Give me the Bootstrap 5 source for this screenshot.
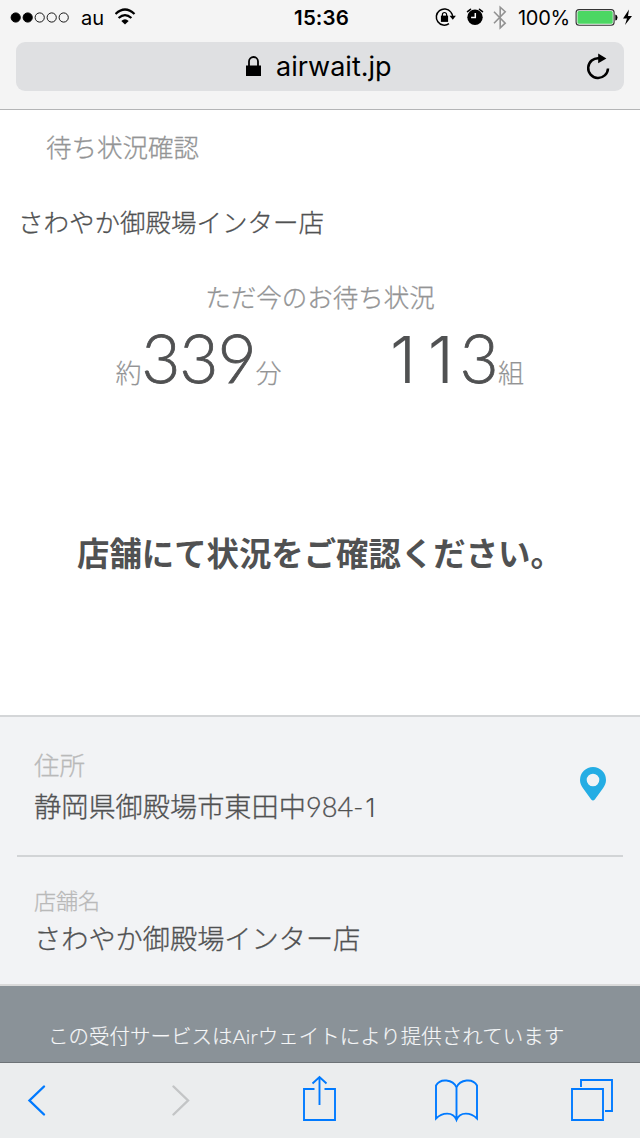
<!DOCTYPE html>
<html lang="ja">
<head>
<meta charset="utf-8">
<meta name="viewport" content="width=device-width, initial-scale=1">
<title>待ち状況確認</title>
<link href="https://cdn.jsdelivr.net/npm/bootstrap@5.3.0/dist/css/bootstrap.min.css" rel="stylesheet">
<style>
  body { font-family: Lato, "Noto Sans CJK JP", sans-serif; font-weight: 300; color: #505152; background: #fff; height: 1138px; overflow: hidden; }
  svg { display: block; flex: none; }
  .ui { font-family: Inter, "Liberation Sans", sans-serif; font-weight: 400; color: #000; }
  .chrome-top { background: #f4f4f4; height: 110px; border-bottom: 1px solid #b4b5b6; }
  .status { height: 35px; font-size: 20px; line-height: 35px; }
  .clock { width: 100px; font-weight: 600; font-size: 20.5px; letter-spacing: .1px; padding-left: 3px; }
  .carrier { margin-left: 1px; margin-right: 11px; line-height: 36px; }
  .charge { width: 57px; letter-spacing: -.3px; line-height: 36px; }
  .side { width: 270px; }
  .urlbar { height: 49px; margin: 7px 16px 0; border-radius: 9px; background: #dfe0e2; font-size: 27px; line-height: 49px; }
  .lock { margin-left: 230px; margin-right: 15px; }
  .reload { margin-right: 13px; }
  .jp { line-height: 30px; font-size: 25.5px; white-space: nowrap; -webkit-text-stroke: .3px currentColor; }
  .grey { color: #939495; }
  .pale { color: #b9b9b9; }
  .heading { padding: 22px 0 0 46px; }
  .shop { padding: 45px 0 0 18px; }
  .now { padding-top: 44.5px; }
  .figures { margin-top: 5.5px; height: 80px; font-size: 26px; line-height: 80px; white-space: nowrap; -webkit-text-stroke: .2px currentColor; }
  .wait { width: 269px; padding-left: 115.5px; }
  .groups { padding-left: 115px; }
  .digits { font-size: 67px; color: #505152; font-weight: 300; -webkit-text-stroke: .8px #505152; width: 114px; text-align: center; letter-spacing: -.8px; }
  .one { display: inline-block; width: 37.7px; font-family: Inter, sans-serif; font-size: 65px; font-weight: 300; letter-spacing: 0; -webkit-text-stroke: .2px currentColor; text-align: center; }
  .value .one { width: 14px; font-size: 26px; -webkit-text-stroke: 0; }
  .notice { height: 318px; padding: 137px 0 0 77px; }
  .notice p { font-size: 32.4px; line-height: 40px; font-weight: 700; }
  .info { background: #f2f3f5; height: 271px; border-top: 2px solid #d4d6d8; border-bottom: 2px solid #dadada; }
  .address { height: 140px; margin: 0 17px; padding: 33px 17px 0; border-bottom: 2px solid #d2d4d6; }
  .branch { padding: 29px 0 0 34px; }
  .value { font-size: 27.2px; }
  .pin { margin-top: 17px; }
  .credit { background: #8a9298; height: 76px; padding: 35px 0 0 48px; color: #f6f7f8; }
  .credit .jp { font-size: 20.5px; -webkit-text-stroke-width: .15px; }
  .toolbar { height: 76px; background: #ebedee; border-top: 1px solid #6d7377; }
</style>
</head>
<body class="d-flex flex-column">
<header class="chrome-top ui flex-shrink-0">
  <div class="status d-flex">
    <div class="side d-flex align-items-center">
      <svg width="72" height="35" class="ms-2"><g stroke="#000"><circle cx="7.7" cy="17.5" r="4.6"/><circle cx="19.7" cy="17.5" r="4.6"/><g fill="none" stroke-width=".9"><circle cx="31.7" cy="17.5" r="4.6"/><circle cx="43.7" cy="17.5" r="4.6"/><circle cx="55.7" cy="17.5" r="4.6"/></g></g></svg>
      <span class="carrier">au</span>
      <svg width="22" height="35" viewBox="1 -8.500 22 35"><g fill="none" stroke="#000" stroke-width="2.3"><path d="M1.500 5.500Q11-3.500 20.500 5.500"/><path d="M4.600 9.500Q11 3.800 17.400 9.500"/></g><path d="M7.3 12.400Q11 9.200 14.700 12.400L11 16Z"/></svg>
    </div>
    <div class="clock text-center">15:36</div>
    <div class="side d-flex align-items-center">
      <svg width="140" height="35" viewBox="370 0 140 35" class="me-2">
        <g fill="none" stroke="#000" stroke-width="1.5"><path d="M450.700 11.900A8.100 8.100 0 1 0 449 23.700M450.700 11.900A8.100 8.100 0 0 1 452.700 17"/></g><path d="M449.500 15.800h6.400l-3.100 4z"/><path d="M440.900 15.600h7.200v6.300h-7.200z"/><path d="M442.400 16v-1.400a2.100 2.100 0 0 1 4.200 0V16" fill="none" stroke="#000" stroke-width="1.200"/>
        <circle cx="475" cy="17.300" r="7.700"/><path d="M475.300 13v4.600h-4.200" fill="none" stroke="#fff" stroke-width="1.500"/><path d="M467.500 11.600l3-2.300M482.500 11.600l-3-2.300" stroke="#000" stroke-width="1.600" stroke-linecap="round"/>
        <path d="M494 11.700l11.200 11.500-5 4.700V7.200l5 4.500L494 23.200" fill="none" stroke="#929292" stroke-width="1.600"/>
      </svg>
      <span class="charge">100%</span>
      <svg width="64" height="35" viewBox="574.500 0 64 35"><rect x="575.600" y="9.600" width="38" height="15.600" rx="3" fill="#f4f4f4" stroke="#333" stroke-width="1.100"/><rect x="577" y="11" width="35.200" height="12.800" rx="1.500" fill="#4cd763"/><path d="M614.800 14.500q2.200.3 2.200 3t-2.200 3z"/><path d="M628.500 9.500l-6 9h4l-2 6.500 7-9h-4z"/></svg>
    </div>
  </div>
  <div class="urlbar d-flex align-items-center">
    <svg width="15" height="21" viewBox="0 0 15 21" class="lock"><path d="M0 9.500h15V20H0z"/><path d="M3 10V5.500a4.500 4.500 0 0 1 9 0V10" fill="none" stroke="#000" stroke-width="1.800"/></svg>
    <span>airwait.jp</span>
    <svg width="26" height="30" viewBox="585 51.500 26 30" class="reload ms-auto"><path d="M599 57.700a9.900 9.900 0 1 0 9 10.300" fill="none" stroke="#000" stroke-width="2.500"/><path d="M598.200 53l8.200 4.900-8.200 4.900z"/></svg>
  </div>
</header>

<main class="flex-shrink-0">
  <h1 class="jp heading grey fw-light mb-0">待ち状況確認</h1>
  <p class="jp shop mb-0">さわやか御殿場インター店</p>
  <p class="jp now grey text-center mb-0">ただ今のお待ち状況</p>
  <div class="figures d-flex grey">
    <div class="wait d-flex align-items-baseline"><span>約</span><span class="digits">339</span><span>分</span></div>
    <div class="groups d-flex align-items-baseline"><span class="digits"><span class="one">1</span><span class="one">1</span>3</span><span>組</span></div>
  </div>
  <div class="notice"><p class="mb-0 text-nowrap">店舗にて状況をご確認ください。</p></div>
</main>

<section class="info flex-shrink-0">
  <div class="address d-flex justify-content-between">
    <div>
      <div class="jp pale">住所</div>
      <div class="jp value mt-2 pt-1">静岡県御殿場市東田中984-<span class="one">1</span></div>
    </div>
    <svg width="26" height="34" viewBox="0 0 26 34" class="pin"><path fill="#25ade4" fill-rule="evenodd" d="M13 0a13 13 0 0 1 13 13c0 3-1.200 5.600-3 8.200L14.800 32.600q-1.800 2-3.600 0L3 21.200C1.200 18.600 0 16 0 13A13 13 0 0 1 13 0zm0 6.700a6.300 6.300 0 1 0 0 12.600 6.300 6.300 0 0 0 0-12.600z"/></svg>
  </div>
  <div class="branch">
    <div class="jp pale" style="font-size:22px">店舗名</div>
    <div class="jp value mt-1 pt-1">さわやか御殿場インター店</div>
  </div>
</section>

<footer class="credit flex-shrink-0"><div class="jp">この受付サービスはAirウェイトにより提供されています</div></footer>

<nav class="toolbar d-flex flex-shrink-0">
  <svg width="172" height="75" viewBox="-27 0 172 75"><path d="M17 23.500L2.500 37.500 17 51.500" fill="none" stroke="#007aff" stroke-width="2.400" stroke-linecap="round"/></svg>
  <svg width="130" height="75" viewBox="1.500 0 130 75"><path d="M3 23.500L17.500 37.500 3 51.500" fill="none" stroke="#c3c5c6" stroke-width="2.400" stroke-linecap="round"/></svg>
  <svg width="133" height="75" viewBox="0 0 133 75"><path d="M12.500 26H2v31h31V26H22.500M17.500 42V14M10.500 20.500L17.500 14l7 6.500" fill="none" stroke="#007aff" stroke-width="1.900"/></svg>
  <svg width="135" height="75" viewBox="0 0 135 75"><path d="M21.500 24.500C18 16 5 15 1 22.500V55.500C7 49.500 18 48 21.500 57C25 48 36 49.500 42 55.500V22.500C38 15 25 16 21.500 24.500V57" fill="none" stroke="#007aff" stroke-width="1.900"/></svg>
  <svg width="43" height="75" viewBox="0 0 43 75"><path d="M2 26h31v31H2zM11 24v-7H42v31h-7" fill="none" stroke="#007aff" stroke-width="1.900"/></svg>
</nav>
<script src="https://cdn.jsdelivr.net/npm/bootstrap@5.3.0/dist/js/bootstrap.bundle.min.js"></script>
</body>
</html>
